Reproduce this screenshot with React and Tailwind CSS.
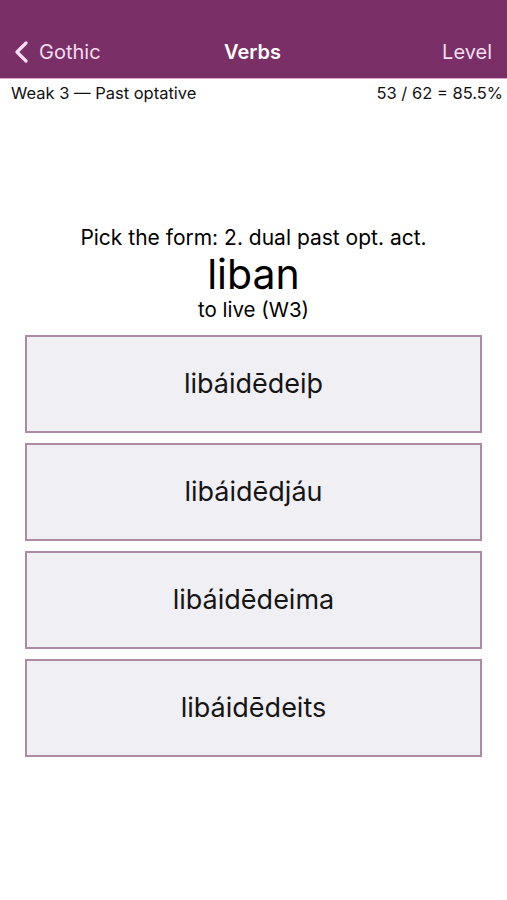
export default function App() {
  const options = ["libáidēdeiþ", "libáidēdjáu", "libáidēdeima", "libáidēdeits"];

  return (
    <div className="w-[507px] h-[900px] bg-white font-['Inter',sans-serif] text-black">
      <header className="h-[79px] bg-[#7a2f66] border-b border-[#d9a3c8] flex items-end pb-[11px] px-[13px]">
        <div className="flex-1 flex items-center gap-[8px] text-[#f4def0] text-[20px]">
          <svg width="18" height="22" viewBox="0 0 18 22" fill="none">
            <path d="M13 2 L4 11 L13 20" stroke="#f4def0" strokeWidth="3.2" strokeLinecap="round" strokeLinejoin="round" />
          </svg>
          <span>Gothic</span>
        </div>
        <div className="text-white text-[20px] font-semibold">Verbs</div>
        <div className="flex-1 text-right text-[#f4def0] text-[20px] pr-[2px]">Level</div>
      </header>

      <div className="flex justify-between pl-[11px] pr-[4px] pt-[2px] text-[16.5px] leading-[24px] text-[#111]">
        <span>Weak 3 — Past optative</span>
        <span>53 / 62 = 85.5%</span>
      </div>

      <div className="mt-[120px] flex flex-col items-center">
        <div className="text-[21px] leading-[26px]">Pick the form: 2. dual past opt. act.</div>
        <div className="text-[41px] leading-[46px]">liban</div>
        <div className="text-[20.5px] leading-[26px]">to live (W3)</div>
      </div>

      <div className="mt-[12px] px-[25px] flex flex-col gap-[10px]">
        {options.map((o) => (
          <button
            key={o}
            className="h-[98px] w-full bg-[#f0eff4] border-2 border-[#b08aa5] text-[27px] text-[#151515] flex items-center justify-center"
          >
            {o}
          </button>
        ))}
      </div>
    </div>
  );
}
